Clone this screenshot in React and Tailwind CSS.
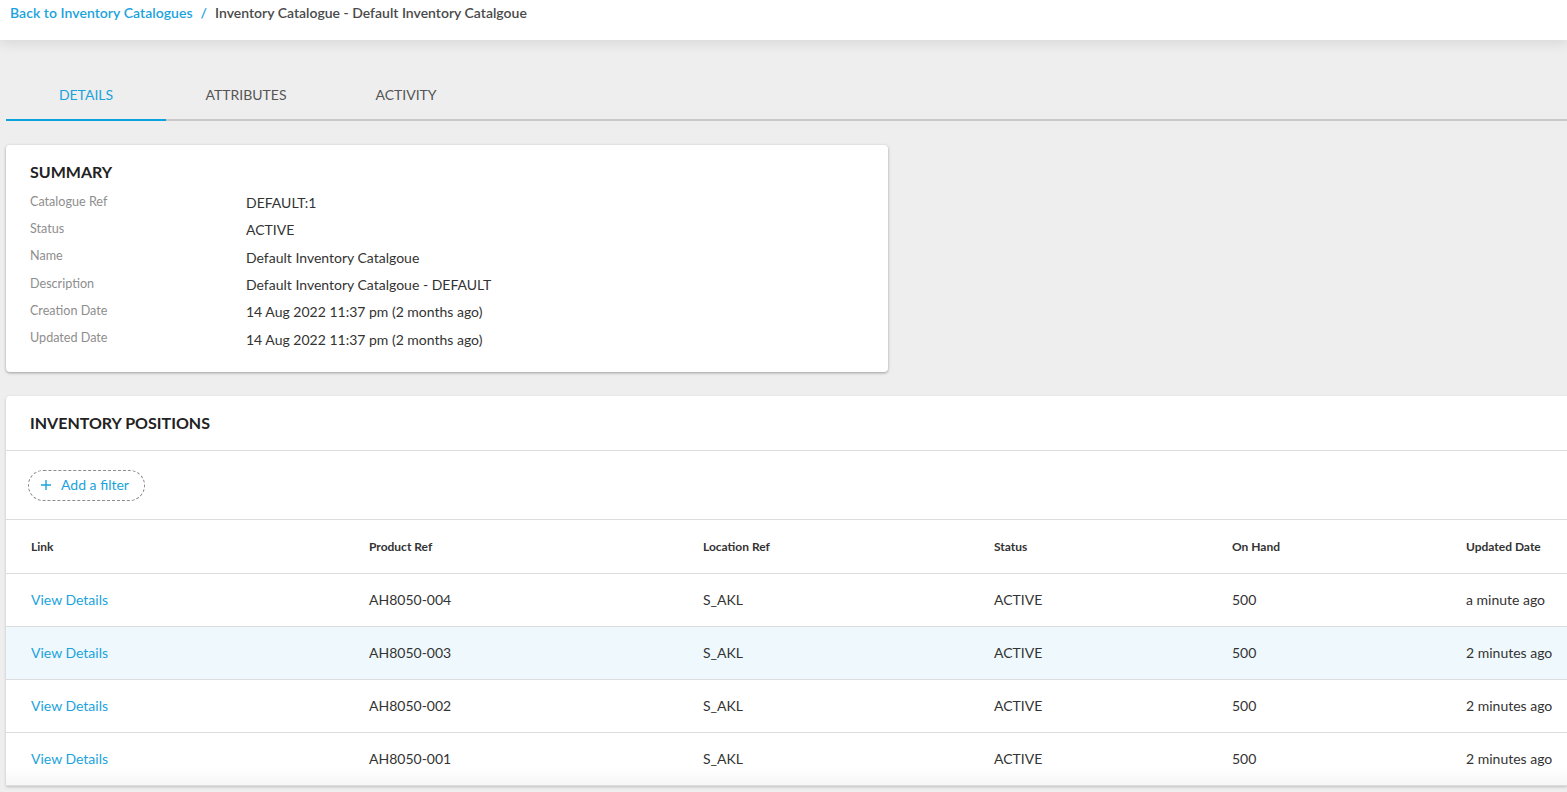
import React from "react";

const rows = [
  { p: "AH8050-004", u: "a minute ago", hl: false },
  { p: "AH8050-003", u: "2 minutes ago", hl: true },
  { p: "AH8050-002", u: "2 minutes ago", hl: false },
  { p: "AH8050-001", u: "2 minutes ago", hl: false },
];

const summary = [
  ["Catalogue Ref", "DEFAULT:1"],
  ["Status", "ACTIVE"],
  ["Name", "Default Inventory Catalgoue"],
  ["Description", "Default Inventory Catalgoue - DEFAULT"],
  ["Creation Date", "14 Aug 2022 11:37 pm (2 months ago)"],
  ["Updated Date", "14 Aug 2022 11:37 pm (2 months ago)"],
];

const cols = "grid grid-cols-[338px_334px_291px_238px_234px_1fr] pl-[25px] items-center";

export default function App() {
  return (
    <div
      className="relative h-[792px] overflow-hidden bg-[#eeeeee] text-[#333333]"
      style={{ fontFamily: "Lato, 'Noto Sans', sans-serif" }}
    >
      {/* Header */}
      <div className="relative z-10 h-[40px] bg-white pl-[10px] pt-[4px] shadow-[0_3px_12px_rgba(0,0,0,0.10)]">
        <div className="flex items-center text-[14px] leading-[18px] font-semibold">
          <span className="text-[#1aa3dc] tracking-[0.05px]">Back to Inventory Catalogues</span>
          <span className="mx-[8px] text-[#1aa3dc]">/</span>
          <span className="text-[#4a4a4a]">Inventory Catalogue - Default Inventory Catalgoue</span>
        </div>
      </div>

      {/* Tabs */}
      <div className="ml-[6px] mt-[30px] flex border-b-2 border-[#c8c8c8]">
        <div className="relative -mb-[2px] flex h-[51px] w-[160px] items-center justify-center border-b-2 border-[#0aa3dc] text-[14px] text-[#1aa3dc]">
          DETAILS
        </div>
        <div className="flex h-[49px] w-[160px] items-center justify-center text-[14px] text-[#555555]">
          ATTRIBUTES
        </div>
        <div className="flex h-[49px] w-[160px] items-center justify-center text-[14px] text-[#555555]">
          ACTIVITY
        </div>
      </div>

      {/* Summary card */}
      <div className="ml-[6px] mt-[24px] h-[227px] w-[882px] rounded-[4px] bg-white pl-[24px] pt-[17px] shadow-[0_1px_3px_rgba(0,0,0,0.35)]">
        <div className="text-[16px] font-bold leading-[20px] text-[#222222]">SUMMARY</div>
        <div className="mt-[7px] flex flex-col">
          {summary.map(([k, v]) => (
            <div key={k} className="flex h-[27.3px] items-center">
              <div className="w-[216px] -mt-[1px] text-[12.6px] text-[#8e8e8e]">{k}</div>
              <div className="text-[14px] text-[#333333]">{v}</div>
            </div>
          ))}
        </div>
      </div>

      {/* Inventory positions card */}
      <div className="relative ml-[6px] mt-[24px] rounded-tl-[4px] bg-white shadow-[0_1px_3px_rgba(0,0,0,0.2)]">
        <div className="flex h-[55px] items-center border-b border-[#dddddd] pl-[24px]">
          <span className="text-[16px] font-bold text-[#222222]">INVENTORY POSITIONS</span>
        </div>
        <div className="flex h-[69px] items-center border-b border-[#dddddd] pl-[22px]">
          <div className="flex h-[31px] w-[117px] items-center rounded-full border border-dashed border-[#8c8c8c] pb-[1px] pl-[11px] text-[14px] text-[#1aa3dc]">
            <svg width="12" height="12" viewBox="0 0 12 12" className="mr-[9px]">
              <path d="M6 1v10M1 6h10" stroke="#1aa3dc" strokeWidth="1.4" />
            </svg>
            Add a filter
          </div>
        </div>
        <div className={`${cols} h-[54px] border-b border-[#dddddd] text-[12px] font-bold text-[#333333]`}>
          <div>Link</div>
          <div>Product Ref</div>
          <div>Location Ref</div>
          <div>Status</div>
          <div>On Hand</div>
          <div>Updated Date</div>
        </div>
        {rows.map((r) => (
          <div
            key={r.p}
            className={`${cols} h-[53px] border-b border-[#dddddd] pb-[2px] text-[14px] text-[#333333] ${r.hl ? "bg-[#eff9fd]" : "bg-white"}`}
          >
            <div className="text-[#1aa3dc]">View Details</div>
            <div>{r.p}</div>
            <div>S_AKL</div>
            <div>ACTIVE</div>
            <div>500</div>
            <div>{r.u}</div>
          </div>
        ))}
        <div className="pointer-events-none absolute bottom-[1px] left-0 right-0 h-[18px] bg-gradient-to-b from-transparent to-[rgba(0,0,0,0.035)]" />
      </div>
    </div>
  );
}
